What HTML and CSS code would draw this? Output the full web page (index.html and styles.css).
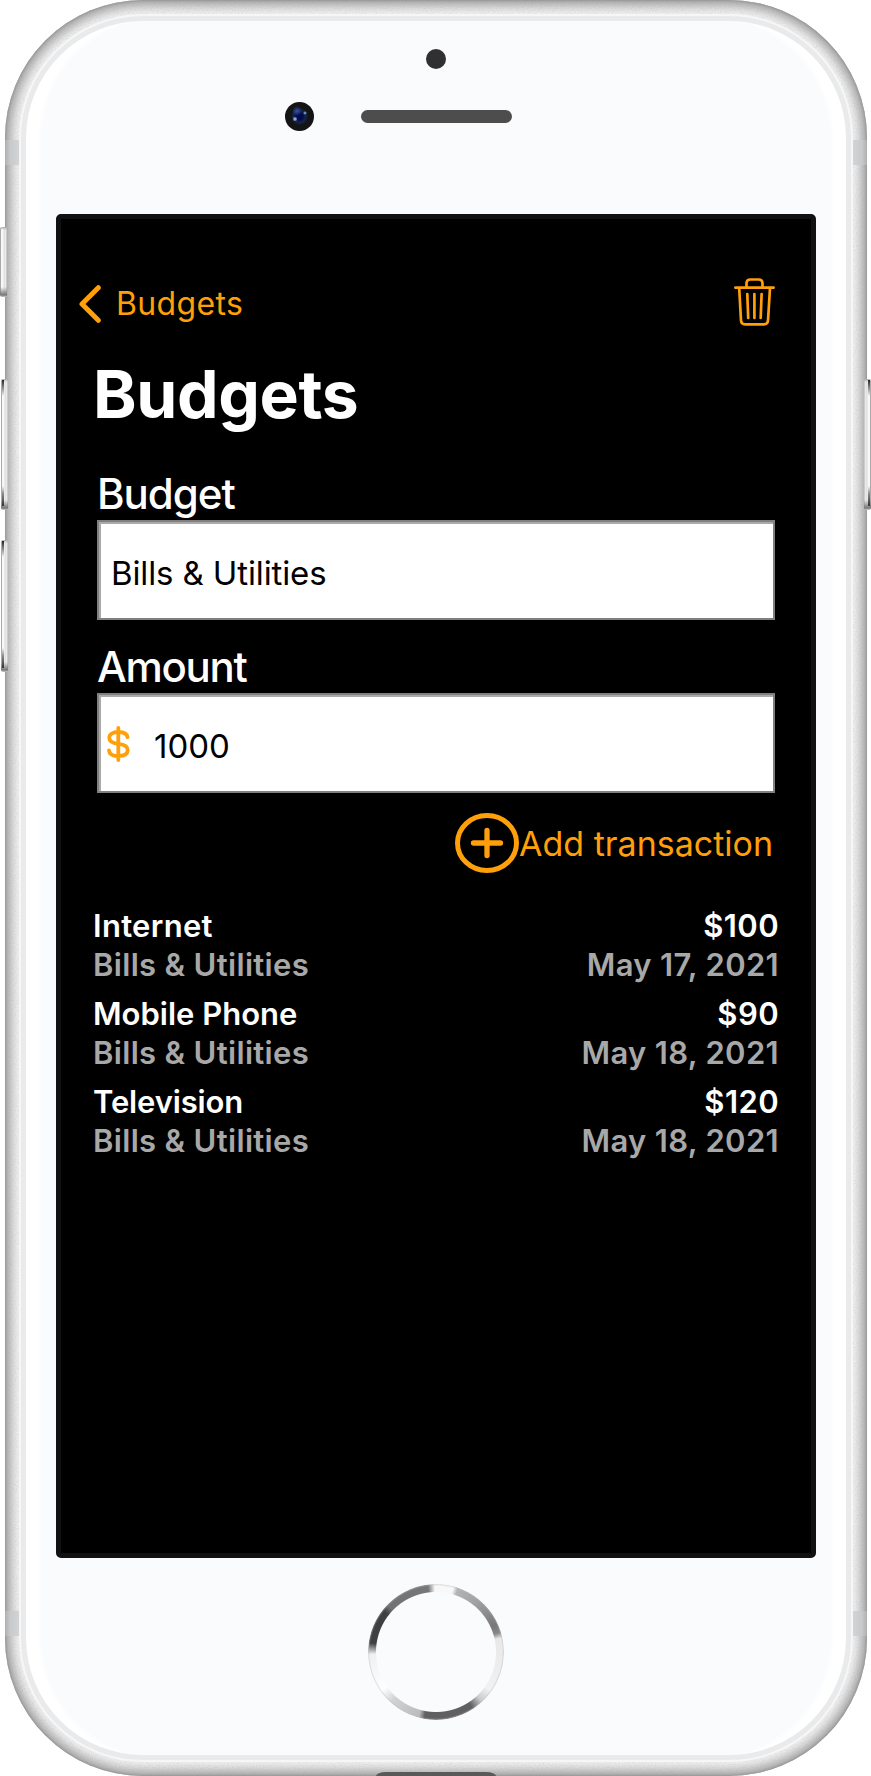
FILE: index.html
```html
<!DOCTYPE html>
<html lang="en">
<head>
<meta charset="utf-8">
<title>Budgets</title>
<link rel="stylesheet" href="styles.css">
</head>
<body>
<div class="phone">
  <svg class="grain" width="862" height="1776" aria-hidden="true">
    <filter id="noise" x="0" y="0" width="100%" height="100%"><feTurbulence type="fractalNoise" baseFrequency="0.7" numOctaves="2"/><feColorMatrix values="0 0 0 0 0.35  0 0 0 0 0.35  0 0 0 0 0.35  0.7 0 0 0 -0.27"/></filter>
    <rect width="862" height="1776" filter="url(#noise)"/>
  </svg>
  <i class="antenna antenna-tl"></i><i class="antenna antenna-tr"></i>
  <i class="antenna antenna-bl"></i><i class="antenna antenna-br"></i>
  <i class="key mute"></i><i class="key vol-up"></i><i class="key vol-down"></i><i class="key power"></i>
  <div class="face">
    <div class="sensors">
      <i class="proximity"></i>
      <div class="speaker-row"><i class="camera"></i><i class="speaker"></i></div>
    </div>
    <main class="screen">
      <nav class="nav">
        <a class="back">
          <svg class="chevron" width="22" height="38" viewBox="0 0 22 38"><path d="M19.300 2.700 3 19l16.300 16.300" fill="none" stroke="#ff9f0a" stroke-width="5" stroke-linecap="round" stroke-linejoin="round"/></svg>
          <span class="back-label">Budgets</span>
        </a>
        <svg class="trash" width="41" height="48" viewBox="0 0 41 48" fill="none" stroke="#ff9f0a" stroke-width="2.700" stroke-linecap="round" stroke-linejoin="round"><path d="M1.400 9.700H39.600M12.500 9V5.500Q12.500 1.500 16.500 1.500H24.500Q28.500 1.500 28.500 5.500V9M5.200 10 7 42.500Q7.300 46.300 11 46.300H30Q33.700 46.300 34 42.500L36 10M13.300 16l.9 24M20.400 16v24M27.600 16l-.9 24"/></svg>
      </nav>
      <h1 class="title">Budgets</h1>
      <label class="label label-budget">Budget</label>
      <div class="field"><span class="value">Bills &amp; Utilities</span></div>
      <label class="label label-amount">Amount</label>
      <div class="field">
        <svg class="dollar" width="23" height="36" viewBox="0 0 23 36" fill="none" stroke="#ff9f0a" stroke-width="3.800" stroke-linecap="round"><path d="M11.300 2V34M20.500 11.200C20 7.500 16.500 6 11.300 6 6 6 2.300 8 2.300 12S6 17.300 11.300 17.800C17 18.300 20.700 20 20.700 24.300S17 30 11.300 30C6 30 2.300 28.200 2 24.300"/></svg>
        <span class="number">1000</span>
      </div>
      <a class="add">
        <svg width="64" height="60" viewBox="0 0 64 60" fill="none" stroke="#ff9f0a"><ellipse cx="32" cy="30" rx="29.500" ry="27.500" stroke-width="5"/><path d="M18.500 30H45.500M32 17.500V42.500" stroke-width="5.300" stroke-linecap="round"/></svg>
        <span class="add-label">Add transaction</span>
      </a>
      <ul class="list">
        <li class="item"><b class="name n1">Internet</b><b class="sum">$100</b><span class="sub">Bills &amp; Utilities</span><span class="date">May 17, 2021</span></li>
        <li class="item"><b class="name n2">Mobile Phone</b><b class="sum">$90</b><span class="sub">Bills &amp; Utilities</span><span class="date">May 18, 2021</span></li>
        <li class="item"><b class="name n3">Television</b><b class="sum">$120</b><span class="sub">Bills &amp; Utilities</span><span class="date">May 18, 2021</span></li>
      </ul>
    </main>
    <div class="home"></div>
  </div>
  <i class="port"></i>
</div>
</body>
</html>
```
FILE: styles.css
```css
* { box-sizing: border-box; }
body { margin: 0; background: #fff; font-family: Inter, "Liberation Sans", sans-serif; overflow: hidden; }
svg { display: block; flex: none; }
i { display: block; }
.phone {
  position: relative; width: 862px; height: 1776px; margin-left: 5px; padding: 16px;
  border-radius: 138px; background: #f4f4f4;
  box-shadow: inset 0 0 3px #808080, inset 0 0 11px 3px #999, inset 0 0 10px 8px #d4d4d4;
}
.grain { position: absolute; inset: 0; clip-path: inset(0 round 138px); opacity: .6; }
.face {
  position: relative; height: 1744px; border: 5px solid #e8eaec; border-radius: 122px;
  background: #fafbfd; box-shadow: inset 18px 0 5px -4px #fff, inset -18px 0 5px -4px #fff;
  display: flex; flex-direction: column; align-items: center;
  outline: 2px solid #f6f6f6;
}
.sensors { width: 151px; height: 193px; padding-top: 28px; }
.proximity { width: 20px; height: 20px; margin: 0 auto; border-radius: 50%; background: #303032; }
.speaker-row { display: flex; align-items: center; gap: 47px; margin-top: 33px; margin-left: -76px; }
.camera {
  flex: none; width: 29px; height: 29px; border-radius: 50%;
  background: radial-gradient(circle at 10px 17px, #8ba7ce 0 1px, transparent 2.500px), radial-gradient(circle at 20px 11px, #6f9fca 0 .5px, transparent 2px), radial-gradient(circle at 12px 9px, #2f52a8, transparent 5px), radial-gradient(circle at 50% 50%, #030a4b 0 3px, #14244f 6px, #151922 8px, #141414 8.500px);
}
.speaker { flex: none; width: 151px; height: 13px; border-radius: 7px; background: #4d4d4d; }
.screen {
  flex: none; width: 760px; height: 1344px; background: #000; border: 5px solid #111; border-radius: 5px;
  padding: 59px 35px 0 24px; color: #fff;
}
.nav { display: flex; justify-content: space-between; height: 48px; align-items: center; padding-right: 1px; color: #ff9f0a; }
.back { display: flex; align-items: center; gap: 15px; padding-top: 4px; margin-left: -6px; }
.chevron { margin-bottom: 1px; }
.back-label { font-size: 32px; line-height: 38px; letter-spacing: .35px; padding-bottom: 1px; }
.title { margin: 28px 0 0 8px; font-size: 66px; line-height: 80px; font-weight: 700; letter-spacing: -.4px; white-space: nowrap; }
.label { display: block; margin-left: 12px; font-size: 42px; line-height: 52px; height: 52px; font-weight: 500; letter-spacing: -1.300px; }
.label-budget { margin-top: 34px; letter-spacing: -1px; }
.label-amount { margin-top: 21px; margin-left: 12px; }
.field {
  display: flex; align-items: center; width: 678px; height: 100px; margin-left: 12px; padding-top: 5px; background: #fff; color: #000;
  border: 2px solid #808080; box-shadow: inset 2px 2px #aaa; font-size: 33px; line-height: 40px;
}
.value { margin-left: 12px; letter-spacing: -.12px; }
.dollar { margin: 0 0 4px 8px; }
.number { margin-left: 24px; letter-spacing: 0; }
.add { display: flex; align-items: center; width: 320px; margin: 20px 0 0 370px; color: #ff9f0a; font-size: 34px; line-height: 42px; }
.add-label { padding: 1px 0 0; white-space: nowrap; }
.list { list-style: none; margin: 33px -3px 0 8px; padding: 0; font-size: 31px; line-height: 39px; }
.item { display: grid; grid-template-columns: 1fr auto; height: 88px; align-content: start; }
.name, .sum { font-weight: 600; }
.n1 { letter-spacing: .3px; }
.n3 { letter-spacing: -.15px; }
.sum { letter-spacing: .4px; }
.sub, .date { color: #a8a8a8; font-weight: 600; letter-spacing: .33px; }
.sum, .date { text-align: right; }
.home {
  width: 136px; height: 136px; margin-top: 26px; border-radius: 50%;
  background: radial-gradient(circle closest-side, transparent 66px, rgba(190, 190, 190, .6) 68px), conic-gradient(#f8f8f8 0deg, #f8f8f8 15deg, #b4b4b4 19deg, #a0a0a0 40deg, #777 66deg, #888 73deg, #e8e8e8 78deg, #f2f2f2 125deg, #ccc 137deg, #606062 147deg, #606062 190deg, #bbb 195deg, #d2d3d4 222deg, #fff 235deg, #f0f0f0 268deg, #404042 278deg, #404042 308deg, #727274 314deg, #777 353deg, #f8f8f8 359deg);
  -webkit-mask: radial-gradient(circle, transparent 59.500px, #000 60.500px);
  mask: radial-gradient(circle, transparent 59.500px, #000 60.500px);
}
.antenna { position: absolute; width: 16px; height: 25px; background: linear-gradient(90deg, #adafb1, #c8c9cb 5px, #d5d6d8); }
.antenna-tl { left: 0; top: 140px; }
.antenna-tr { right: 0; top: 140px; transform: scaleX(-1); }
.antenna-bl { left: 0; top: 1611px; }
.antenna-br { right: 0; top: 1611px; transform: scaleX(-1); }
.key {
  position: absolute; left: -4px; width: 7px; border-radius: 2px 0 0 2px;
  background: linear-gradient(#aaa 0, transparent 3px, transparent calc(100% - 10px), #777 calc(100% - 2px), #ccc), linear-gradient(90deg, #aaa 0 1px, #f5f7f8 1px 3px, #ddd 4px, #ededed 6px, #aaa);
}
.vol-up::before, .vol-down::before, .power::before {
  content: ""; position: absolute; left: 1px; top: 1px; bottom: 4px; width: 2px;
  background: linear-gradient(#222, #999 9px, transparent 16px, transparent calc(100% - 20px), #888 calc(100% - 12px), #333);
}
.mute { left: -5px; top: 227px; height: 70px; }
.vol-up { top: 379px; height: 131px; }
.vol-down { top: 540px; height: 132px; }
.power { left: auto; right: -4px; top: 379px; height: 131px; transform: scaleX(-1); }
.port { position: absolute; left: 371px; top: 1772px; width: 120px; height: 4px; background: #59595b; border-radius: 10px 10px 0 0 / 4px 4px 0 0; }
```
